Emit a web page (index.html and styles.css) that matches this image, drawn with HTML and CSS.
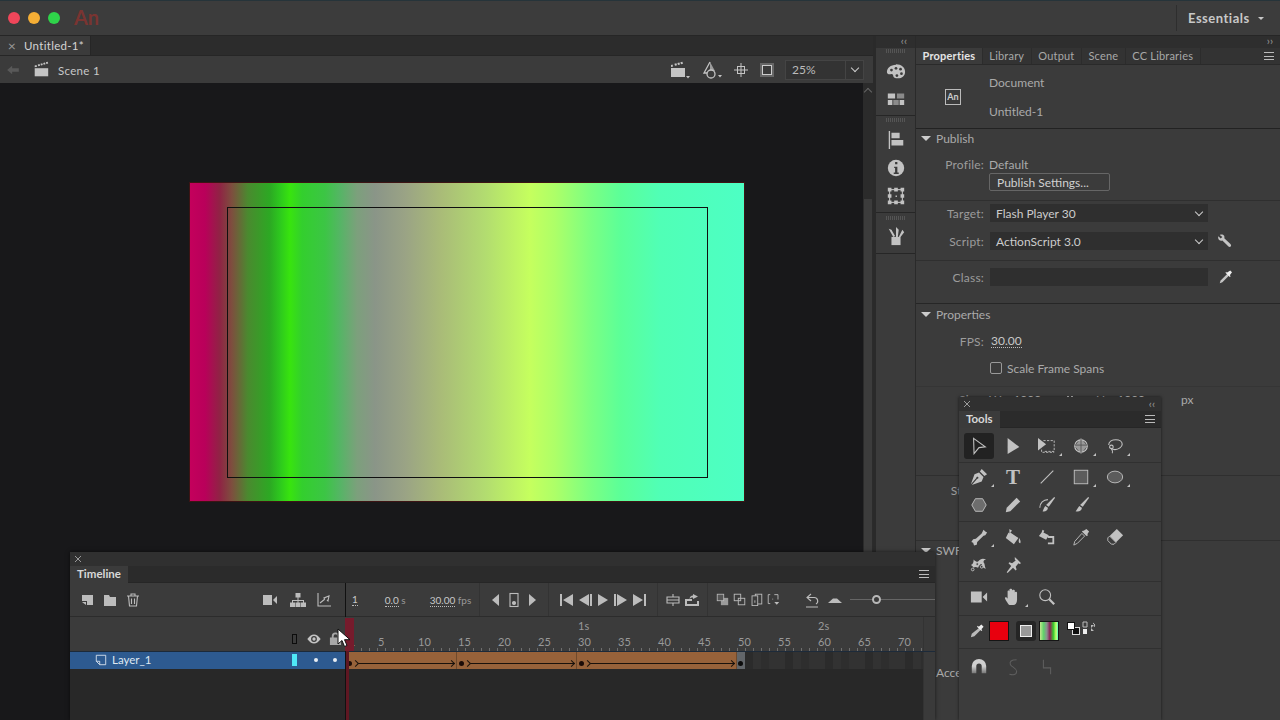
FILE: index.html
```html
<!DOCTYPE html>
<html lang="en">
<head>
    <meta charset="UTF-8">
    <meta name="viewport" content="width=device-width, initial-scale=1.0">
    <title>Adobe Animate</title>
    <link rel="stylesheet" href="styles.css">
</head>
<body>
    <!-- App title bar -->
    <header class="titlebar">
        <span class="light light-red"></span>
        <span class="light light-amber"></span>
        <span class="light light-green"></span>
        <span class="app-logo">An</span>
        <div class="workspace-switch">Essentials <span class="caret"></span></div>
    </header>

    <main class="workspace">
        <!-- Document column -->
        <section class="doc-col">
            <div class="doc-tabs">
                <div class="doc-tab"><span class="doc-close">&times;</span>Untitled-1*</div>
            </div>
            <div class="scene-bar">
                <svg class="back-icon" viewBox="0 0 14 12"><path d="M0 6l6-5v3h8v4H6v3z"/></svg>
                <svg class="icon scene-icon" viewBox="0 0 20 20"><path d="M3 8h15v9H3z"/><path d="M3 7V5l2-.5.6 2zM7 5.800l-.6-2 2-.6.6 2zM10 5l-.6-2 2-.6.6 2zM13 4.200l-.6-2 2-.6.6 2zM16 3.400l-.6-2 2-.5.6 2z"/></svg>
                <span class="scene-name">Scene 1</span>
                <div class="scene-tools">
                    <svg class="icon" viewBox="0 0 20 20"><path d="M1 8h14v9H1z"/><path d="M1 7V5l1.500-.4.6 2zM5 5.800l-.6-2 2-.5.6 2zM8 5l-.6-2 2-.5.6 2zM11 4.200l-.6-2 2-.5.6 2z"/><path d="M16 16h4l-2 2.500z"/></svg>
                    <svg class="icon" viewBox="0 0 20 20"><path d="M8 2L2 13h5" fill="none" stroke="currentColor" stroke-width="1.300"/><path d="M8 2l5 9H8z" opacity=".7"/><circle cx="9" cy="14" r="4" fill="#3b3b3b" stroke="currentColor" stroke-width="1.300"/><path d="M16 15h4l-2 2.500z"/></svg>
                    <svg class="icon" viewBox="0 0 20 20"><path d="M10 3v14M3 10h14" stroke="currentColor" fill="none"/><rect x="6.500" y="6.500" width="7" height="7" fill="none" stroke="currentColor"/></svg>
                    <svg class="icon" viewBox="0 0 20 20"><rect x="3" y="3" width="14" height="14" fill="#666"/><rect x="5.500" y="5.500" width="9" height="9" fill="#3b3b3b" stroke="#ccc"/></svg>
                    <div class="zoom-box"><span class="zoom-value">25%</span><span class="zoom-arrow"><span class="chevron"></span></span></div>
                </div>
            </div>
            <div class="stage-wrap">
                <div class="stage">
                    <div class="artboard">
                        <div class="art-frame"></div>
                    </div>
                </div>
                <div class="stage-scroll">
                    <span class="scroll-up"></span>
                    <span class="scroll-thumb"></span>
                </div>
            </div>
        </section>

        <!-- Collapsed icon dock -->
        <aside class="dock">
            <div class="collapse-bar">&lsaquo;&lsaquo;</div>
            <div class="dock-group">
                <span class="grip"></span>
                <svg class="dock-icon" viewBox="0 0 22 18"><path d="M11 2C5 2 1 6 1 10c0 2 2 3 4 2.500 2-.5 3 .5 3 2 0 2 2 2.500 5 2.500 5 0 8-3 8-7 0-5-4-8.500-10-8.500z"/><g fill="#3b3b3b"><circle cx="6" cy="8" r="1.500"/><circle cx="11" cy="6" r="1.500"/><circle cx="16" cy="7" r="1.500"/><circle cx="17" cy="12" r="1.500"/><circle cx="12" cy="14" r="1.500"/></g></svg>
                <svg class="dock-icon" viewBox="0 0 22 18"><path d="M2 3h8v5.500H2zM2 10h5v5.500H2zM15 10h5v5.500h-5z"/><path d="M12 3h8v5.500h-8zM8 10h6v5.500H8z" fill="#8a8a8a"/></svg>
            </div>
            <div class="dock-group dock-group-tall">
                <span class="grip"></span>
                <svg class="dock-icon" viewBox="0 0 22 22"><path d="M3 1h1.500v20H3zM6 3h9v6H6zM6 11h13v6H6z"/></svg>
                <svg class="dock-icon" viewBox="0 0 22 22"><circle cx="11" cy="11" r="9"/><path d="M9 9.500h3.500V16H14v1.500H8.500V16H10v-5H9zM10 4.500h2.500V7H10z" fill="#3b3b3b"/></svg>
                <svg class="dock-icon" viewBox="0 0 22 22"><rect x="4" y="4" width="14" height="14" fill="none" stroke="currentColor" stroke-width="1.200"/><path d="M2 2h4v4H2zM9 2h4v4H9zM16 2h4v4h-4zM2 9h4v4H2zM16 9h4v4h-4zM2 16h4v4H2zM9 16h4v4H9zM16 16h4v4h-4zM10.500 10.500h1.500v1.500h-1.500z"/></svg>
            </div>
            <div class="dock-group dock-group-last">
                <span class="grip"></span>
                <svg class="dock-icon" viewBox="0 0 22 22"><path d="M6 12h10v9H6z"/><path d="M8 12L3 3l3 1 4 7zM11 12V1l3 3-1 8zM14 12l4-8 2 3-4 5z"/></svg>
            </div>
            <div class="dock-rest"></div>
        </aside>

        <!-- Properties panel -->
        <section class="props">
            <div class="collapse-bar collapse-right">&rsaquo;&rsaquo;</div>
            <div class="props-tabs">
                <span class="props-tab props-tab-active">Properties</span>
                <span class="props-tab">Library</span>
                <span class="props-tab">Output</span>
                <span class="props-tab">Scene</span>
                <span class="props-tab">CC Libraries</span>
                <span class="menu-lines props-menu"></span>
            </div>
            <div class="doc-info">
                <span class="an-badge">An</span>
                <div class="doc-lines">
                    <span>Document</span>
                    <span>Untitled-1</span>
                </div>
            </div>

            <div class="section section-publish">
                <div class="section-head"><span class="tri"></span>Publish</div>
                <div class="row row-profile"><label class="lab">Profile:</label><span>Default</span></div>
                <div class="row"><span class="lab"></span><button class="settings-btn">Publish Settings...</button></div>
            </div>
            <div class="section section-target">
                <div class="row"><label class="lab">Target:</label><div class="select">Flash Player 30<span class="chevron"></span></div></div>
                <div class="row row-script"><label class="lab">Script:</label><div class="select">ActionScript 3.0<span class="chevron"></span></div>
                    <svg class="field-icon" viewBox="0 0 16 16"><path d="M2 1c2-1 4-.5 5 1 .5 1 .5 2 .2 2.800l7 6.700c1 1 1 2 .3 2.800-.8.8-2 .7-2.800-.2L5 7.500C3.500 8 2 7.500 1 6.500 0 5 0 3.500.5 2.500L3 5l2-1.500z"/></svg>
                </div>
            </div>
            <div class="section section-class">
                <div class="row"><label class="lab">Class:</label><div class="select"></div>
                    <svg class="field-icon" viewBox="0 0 16 16"><path d="M11 4l2 2-8 8-3 1 1-3z"/><path d="M10 3l4-2.500 2 2L13.500 6l1 1-1 1-5-5 1-1z" fill="#eee"/></svg>
                </div>
            </div>
            <div class="section section-doc">
                <div class="section-head"><span class="tri"></span>Properties</div>
                <div class="row row-fps"><label class="lab">FPS:</label><span class="hot">30.00</span></div>
                <div class="row row-check"><span class="lab"></span><span class="check"></span>Scale Frame Spans</div>
            </div>
            <div class="section section-size">
                <div class="row">
                    <label class="lab">Size:</label>
                    <span class="size-val">W: <span class="hot">1000</span></span>
                    <svg class="size-link" viewBox="0 0 8 8"><path d="M1 1h2v6H1zM5 1h2v6H5z"/></svg>
                    <span class="size-val size-val-h">H: <span class="hot">1000</span></span>
                    <span>px</span>
                </div>
            </div>
            <div class="section section-stage">
                <div class="row"><label class="lab">Stage:</label></div>
            </div>
            <div class="section section-swf">
                <div class="section-head"><span class="tri"></span>SWF History</div>
            </div>
            <div class="section-head section-acc">Accessibility</div>
        </section>
    </main>

    <!-- Floating timeline panel -->
    <section class="timeline">
        <div class="float-top">
            <svg class="float-close" viewBox="0 0 8 8"><path d="M1 1l6 6M7 1L1 7"/></svg>
        </div>
        <div class="float-tabs">
            <span class="float-tab">Timeline</span>
            <span class="menu-lines"></span>
        </div>
        <div class="tl-toolbar">
            <div class="tl-left">
                <svg class="tl-icon" viewBox="0 0 16 16"><path d="M3 3h11v10H8v-4H3z"/><path d="M3 10h4v3z"/></svg>
                <svg class="tl-icon" viewBox="0 0 16 16"><path d="M2 3h5l1 2h6v9H2z"/></svg>
                <svg class="tl-icon tl-icon-line" viewBox="0 0 16 16"><path d="M2 4h12M6 4V2h4v2M3.500 4l1 10h7l1-10M6.500 6.500v5.500M9.500 6.500v5.500"/></svg>
                <span class="tl-space"></span>
                <svg class="tl-icon" viewBox="0 0 16 16"><path d="M1 3h9v10H1zM11 8l4-4v8z"/></svg>
                <svg class="tl-icon" viewBox="0 0 16 16"><path d="M5.500 1h5v4.500h-5zM7.500 5.500h1V8H14v2.500h-1V9H8.500v1.500h-1V9H3v1.500H2V8h5.500zM0 10.500h5V15H0zM5.500 10.500h5V15h-5zM11 10.500h5V15h-5z"/></svg>
                <svg class="tl-icon tl-icon-line" viewBox="0 0 16 16"><path d="M2 1v13h13M4 11l5-4M9 7l-1-1 5-2-1 5-1-1"/></svg>
            </div>
            <div class="tl-controls">
                <div class="tl-group tl-readouts">
                    <span class="hot">1</span>
                    <span class="readout-time"><span class="hot">0.0</span> s</span>
                    <span class="readout-fps"><span class="hot">30.00</span> fps</span>
                </div>
                <div class="tl-group tl-frames">
                    <svg class="tl-icon" viewBox="0 0 16 16"><path d="M12 2v12L5 8z"/></svg>
                    <svg class="tl-icon tl-icon-line" viewBox="0 0 16 16"><rect x="4" y="1.500" width="8" height="13"/><circle cx="8" cy="11" r="1.500" fill="currentColor"/></svg>
                    <svg class="tl-icon" viewBox="0 0 16 16"><path d="M4 2v12l7-6z"/></svg>
                </div>
                <div class="tl-group tl-transport">
                    <svg class="tl-icon" viewBox="0 0 16 16"><path d="M1 2h2v12H1zM14 2v12L4 8z"/></svg>
                    <svg class="tl-icon" viewBox="0 0 16 16"><path d="M12 2v12L2 8zM13 2h2v12h-2z"/></svg>
                    <svg class="tl-icon" viewBox="0 0 16 16"><path d="M3 2v12l10-6z"/></svg>
                    <svg class="tl-icon" viewBox="0 0 16 16"><path d="M1 2h2v12H1zM4 2v12l10-6z"/></svg>
                    <svg class="tl-icon" viewBox="0 0 16 16"><path d="M2 2v12l10-6zM13 2h2v12h-2z"/></svg>
                </div>
                <div class="tl-group tl-loop">
                    <svg class="tl-icon tl-icon-line" viewBox="0 0 16 16"><path d="M8 2v3M8 11v3M2 5h12v6H2z M2 8h12"/></svg>
                    <svg class="tl-icon" viewBox="0 0 16 16"><path d="M1 7h7v2H3v3h10V9h2v5H1zM9 2l5 2.500L9 7V5.500c-2 0-3 .5-3.500 2C5.500 5 7 3.500 9 3.500z"/></svg>
                </div>
                <div class="tl-group tl-onion">
                    <svg class="tl-icon" viewBox="0 0 16 16"><path d="M6 6h9v9H6z" opacity=".75"/><rect x="1.500" y="1.500" width="8" height="8" fill="#555" stroke="currentColor"/></svg>
                    <svg class="tl-icon tl-icon-line" viewBox="0 0 16 16"><rect x="1.500" y="1.500" width="8" height="8"/><rect x="6.500" y="6.500" width="8" height="8"/></svg>
                    <svg class="tl-icon tl-icon-line" viewBox="0 0 16 16"><rect x="6.500" y="1.500" width="8" height="12"/><rect x="2.500" y="3.500" width="7" height="12" fill="#3b3b3b"/><path d="M6 9v3"/></svg>
                    <svg class="tl-icon tl-icon-line" viewBox="0 0 16 16"><path d="M4 2H1.500v11H4M9 2h4.500v6M7 7v1"/><path d="M9 11h6l-3 3.500z" fill="currentColor" stroke="none"/></svg>
                </div>
                <div class="tl-group tl-zoom">
                    <svg class="tl-icon tl-icon-line" viewBox="0 0 16 16"><path d="M7 2L3 5.500 7 9M3 5.500h7a3.500 3.500 0 0 1 2 6.500M2 15h12"/></svg>
                    <svg class="tl-icon" viewBox="0 0 16 16"><path d="M1 11l5-4.500h4l5 4.500z"/></svg>
                    <div class="tl-slider"><span class="tl-knob"></span></div>
                </div>
            </div>
        </div>
        <div class="tl-head">
            <div class="tl-left tl-left-head">
                <span class="mark-outline"></span>
                <svg class="tl-eye" viewBox="0 0 16 12"><path d="M0 6c3-4 5-5.500 8-5.500S13 2 16 6c-3 4-5 5.500-8 5.500S3 10 0 6z"/><circle cx="8" cy="6" r="3.500" fill="#3b3b3b"/><circle cx="8" cy="6" r="2"/></svg>
                <svg class="tl-lock" viewBox="0 0 14 14"><path d="M3 6V4.500a4 4 0 0 1 8 0V6h2v8H1V6zM5 6h4V4.500a2 2 0 0 0-4 0z"/></svg>
            </div>
            <div class="ruler">
                <div class="seconds">
                    <span class="sec">1s</span>
                    <span class="sec">2s</span>
                </div>
                <div class="frame-nums">
                    <span class="num num-first">1</span>
                    <span class="num">5</span>
                    <span class="num">10</span>
                    <span class="num">15</span>
                    <span class="num">20</span>
                    <span class="num">25</span>
                    <span class="num">30</span>
                    <span class="num">35</span>
                    <span class="num">40</span>
                    <span class="num">45</span>
                    <span class="num">50</span>
                    <span class="num">55</span>
                    <span class="num">60</span>
                    <span class="num">65</span>
                    <span class="num">70</span>
                </div>
            </div>
            <div class="tl-scroll"></div>
        </div>
        <div class="tl-layer">
            <div class="layer-name">
                <svg class="layer-icon" viewBox="0 0 14 14"><path d="M1.500 1.500h11v11h-7l-4-4zM1.500 8.500h4v4" fill="none" stroke="currentColor"/></svg>
                <span class="layer-label">Layer_1</span>
                <span class="layer-color"></span>
                <span class="layer-dot layer-dot-eye"></span>
                <span class="layer-dot"></span>
            </div>
            <div class="frames">
                <div class="tween tween-a"><span class="tween-line"></span></div>
                <div class="tween tween-b"><span class="tween-line"></span></div>
                <div class="tween tween-c"><span class="tween-line"></span></div>
                <div class="end-key"></div>
                <div class="empty-frames"></div>
            </div>
            <div class="tl-scroll"></div>
        </div>
        <div class="tl-rest">
            <div class="tl-rest-fill"></div>
            <div class="tl-scroll"></div>
        </div>
        <span class="playhead-top"></span>
        <span class="playhead-head"></span>
        <span class="playhead-line"></span>
        <svg class="cursor" viewBox="0 0 14 20"><path d="M1 1v15l4-3.500 2.500 6 2.500-1-2.500-5.800H13z" fill="#fff" stroke="#111"/></svg>
    </section>

    <!-- Floating tools panel -->
    <section class="tools">
        <div class="float-top">
            <svg class="float-close" viewBox="0 0 8 8"><path d="M1 1l6 6M7 1L1 7"/></svg>
            <span class="float-collapse">&lsaquo;&lsaquo;</span>
        </div>
        <div class="float-tabs">
            <span class="float-tab">Tools</span>
            <span class="menu-lines"></span>
        </div>

        <div class="tool-group tool-group-select">
            <div class="tool-row tool-row-short">
                <span class="tool tool-on"><svg class="tool-line" viewBox="0 0 20 20"><path d="M4 1.500l13 9.500-7 .8L4.500 18.500z"/></svg></span>
                <span class="tool"><svg viewBox="0 0 20 20"><path d="M4 1l13 10-13 8z"/></svg></span>
                <span class="tool more"><svg viewBox="0 0 20 20"><path d="M0 1l9 7-9 7z"/><path d="M6 4h12v12H6" fill="none" stroke="currentColor" stroke-dasharray="2.500 1.500"/><path d="M4 14v3h14" fill="none" stroke="currentColor" stroke-dasharray="2.500 1.500"/></svg></span>
                <span class="tool more"><svg viewBox="0 0 20 20"><path d="M10 1l7 9-7 9-7-9z" fill="#999"/><circle cx="10" cy="10" r="7" fill="none" stroke="#ccc" stroke-width="1.200"/><path d="M3 9h14M10 2v16" stroke="#555"/></svg></span>
                <span class="tool more"><svg class="tool-line" viewBox="0 0 20 20"><path d="M3 9c0-4 4-6 8-6s7 2 7 5-4 6-8 6c-2 0-4-.5-5-2"/><circle cx="6" cy="11" r="2"/><path d="M6 13c1 2 2 3 1 5"/></svg></span>
            </div>
        </div>
        <div class="tool-group tool-group-draw">
            <div class="tool-row">
                <span class="tool more"><svg viewBox="0 0 20 20"><path d="M13 1l6 6-3 2-5-5zM10 5l5 5-2 5-11 4 6-7c1 0 2-1 1-2-1-.5-2 0-2 1L1 18l4-11z"/></svg></span>
                <span class="tool tool-type">T</span>
                <span class="tool"><svg class="tool-line" viewBox="0 0 20 20"><path d="M3 17L17 3"/></svg></span>
                <span class="tool more"><svg viewBox="0 0 20 20"><rect x="2.500" y="2.500" width="15" height="15" fill="#5c5c5c" stroke="currentColor"/></svg></span>
                <span class="tool more"><svg viewBox="0 0 20 20"><ellipse cx="10" cy="10" rx="8.500" ry="6.500" fill="#5c5c5c" stroke="currentColor"/></svg></span>
            </div>
            <div class="tool-row">
                <span class="tool"><svg viewBox="0 0 20 20"><path d="M6 3h8l4 7-4 7H6l-4-7z" fill="#6d6d6d" stroke="currentColor"/></svg></span>
                <span class="tool"><svg viewBox="0 0 20 20"><path d="M14 2l4 4-11 11-5 1 1-5z"/></svg></span>
                <span class="tool"><svg viewBox="0 0 20 20"><path d="M18 1l1 1-7 10-3-2z"/><path d="M8 11l3 2c0 3-3 5-6 4 1-1 1-3 3-6z"/><path d="M11 4C6 4 2 8 2 13" fill="none" stroke="currentColor" stroke-width="1.200"/></svg></span>
                <span class="tool"><svg viewBox="0 0 20 20"><path d="M18 1l1 1-7 10-3-2z"/><path d="M8 11l3 2c0 3-3 5-7 4 1-1 2-3 4-6z"/></svg></span>
            </div>
        </div>
        <div class="tool-group tool-group-edit">
            <div class="tool-row">
                <span class="tool more"><svg viewBox="0 0 20 20"><path d="M13 6l2-4 2 2 2 1-2 3-2 .5-7 7-.5 3-3 1-1-3-2-1 2-3 3-.5z"/></svg></span>
                <span class="tool"><svg viewBox="0 0 20 20"><path d="M6 1l3 2-2 2 9 6-5 7-9-7 3-6 1 1zM17 11c1 2 2 4 1 6-2 0-2-3-1-6z"/></svg></span>
                <span class="tool"><svg viewBox="0 0 20 20"><path d="M5 2l2 1-1 2 6 3-3 5-8-4 3-4zM11 9h7v9h-7v-2h5v-5h-5z"/></svg></span>
                <span class="tool"><svg viewBox="0 0 20 20"><path d="M13 3l3-2 3 3-2 3 1 1-2 1-5-5 1-1z"/><path d="M11 6l3 3-8 8-4 2 1-4z" fill="#3c3c3c" stroke="currentColor"/></svg></span>
                <span class="tool"><svg viewBox="0 0 20 20"><path d="M12 1l7 7-8 8-7-7z"/><path d="M4 9l7 7-2 2H6l-4-4v-3z" fill="#3c3c3c" stroke="currentColor"/></svg></span>
            </div>
            <div class="tool-row">
                <span class="tool"><svg viewBox="0 0 20 20"><path d="M1 10c3-1 3-4 3-6 2 2 3 3 5 2 3-3 5-4 9-2-2 0-3 1-3 3 2 2 1 6 3 7-3 0-5-2-5-5-2 0-3 2-4 4-2-1-4-1-5 0-1-1-1-2-3-3z"/><g fill="#3c3c3c" stroke="currentColor"><circle cx="3" cy="15" r="1.500"/><circle cx="8" cy="9" r="1.500"/><circle cx="13" cy="12" r="1.500"/></g></svg></span>
                <span class="tool"><svg viewBox="0 0 20 20"><path d="M12 1l7 7-2 1-1-1-3 4 1 3-1 1-3-3-6 6-1-1 5-7-3-3 1-1 3 1 4-3-1-1z"/></svg></span>
            </div>
        </div>
        <div class="tool-group tool-group-view">
            <div class="tool-row">
                <span class="tool"><svg viewBox="0 0 20 20"><path d="M1 4h12v12H1zM14 10l5-5v10z"/></svg></span>
                <span class="tool more"><svg viewBox="0 0 20 20"><path d="M6 19c-2-2-5-7-5-8s2-1 3 1V4c0-1.500 2-1.500 2 0V2c0-1.500 3-1.500 3 0v1c0-1.500 3-1.500 3 0v2c0-1 2.500-1 2.500.5V13c0 4-2 6-4 6z"/></svg></span>
                <span class="tool"><svg class="tool-line" viewBox="0 0 20 20"><circle cx="8" cy="8" r="6"/><path d="M12.500 12.500L18 18" stroke-width="2.500"/></svg></span>
            </div>
        </div>
        <div class="tool-group tool-group-colour">
            <div class="colour-row">
                <svg class="colour-pencil" viewBox="0 0 16 16"><path d="M11 4l2 2-8 8-4 1 1-4z"/><path d="M10 3l3-2.500 2.500 2.500L13 6l1 1-1 1-5-5 1-1z" fill="#eee"/></svg>
                <span class="swatch swatch-red"></span>
                <span class="obj-toggle"><span class="obj-inner"></span></span>
                <span class="swatch swatch-grad"></span>
                <span class="bw-swap"><span class="bw-back"></span><span class="bw-front"></span></span>
                <svg class="swap-icon" viewBox="0 0 14 14"><path d="M1 1h4v5H1z" fill="none" stroke="#bbb"/><path d="M1 8h4v5H1z" fill="#eee"/><path d="M9 1v3h3L9 7zM9 13v-3H12L9 7z"/><path d="M11 2c2 1 2 3 1 4" fill="none" stroke="currentColor"/></svg>
            </div>
        </div>
        <div class="tool-row tool-row-last">
            <span class="tool"><svg viewBox="0 0 20 20"><defs><linearGradient id="magnetFade" x1="0" y1="0" x2="0" y2="1"><stop offset="0.500" stop-color="#cfcfcf"/><stop offset="1" stop-color="#777"/></linearGradient></defs><path fill="url(#magnetFade)" d="M2 17V9a8 8 0 0 1 16 0v8h-5V9a3 3 0 0 0-6 0v8z"/></svg></span>
            <span class="tool tool-dim"><svg class="tool-line" viewBox="0 0 20 20"><path d="M14 2C8 2 6 4 7 7c1 3 7 4 7 8s-4 4-8 3"/></svg></span>
            <span class="tool tool-dim"><svg class="tool-line" viewBox="0 0 20 20"><path d="M6 2v9h8v7"/></svg></span>
        </div>
    </section>
</body>
</html>
```

FILE: styles.css
```css
* {
    box-sizing: border-box;
}

body {
    font-family: "Lato", "Noto Sans", sans-serif;
    font-size: 12px;
    background-color: #3b3b3b;
    color: #b4b4b4;
    margin: 0;
    width: 1280px;
    height: 720px;
    overflow: hidden;
    position: relative;
}

svg {
    fill: currentColor;
    display: block;
    flex: none;
}

/* Title bar */
.titlebar {
    height: 36px;
    background-color: #3c3c3c;
    border-top: 1px solid #26343a;
    border-bottom: 1px solid #262626;
    display: flex;
    align-items: center;
    padding-left: 8px;
    gap: 8px;
}

.light {
    width: 12px;
    height: 12px;
    border-radius: 50%;
}

.light-red {
    background-color: #f0465a;
}

.light-amber {
    background-color: #f5ae35;
}

.light-green {
    background-color: #2fd34a;
}

.app-logo {
    color: #7a3431;
    font-size: 20px;
    font-weight: 700;
    margin-left: 6px;
    margin-top: -3px;
}

.workspace-switch {
    margin-left: auto;
    width: 104px;
    height: 26px;
    border-left: 1px solid #2e2e2e;
    padding-left: 11px;
    display: flex;
    align-items: center;
    gap: 8px;
    color: #c8c8c8;
    font-size: 13px;
    font-weight: 700;
    letter-spacing: 0.5px;
}

.caret {
    width: 0;
    height: 0;
    border-left: 3px solid transparent;
    border-right: 3px solid transparent;
    border-top: 3px solid #c8c8c8;
}

/* Main layout */
.workspace {
    display: flex;
    height: 684px;
}

.doc-col {
    width: 873px;
    display: flex;
    flex-direction: column;
}

.doc-tabs {
    height: 20px;
    background-color: #2c2c2c;
    border-bottom: 1px solid #262626;
    display: flex;
}

.doc-tab {
    width: 91px;
    background-color: #3b3b3b;
    border-right: 1px solid #262626;
    display: flex;
    align-items: center;
    color: #d4d4d4;
    font-size: 11.500px;
    letter-spacing: 0.3px;
}

.doc-close {
    width: 24px;
    text-align: center;
    font-size: 14px;
    color: #999;
}

.scene-bar {
    height: 27px;
    display: flex;
    align-items: center;
    padding-left: 7px;
    padding-right: 9px;
    background-color: #3b3b3b;
}

.back-icon {
    width: 12px;
    height: 10px;
    color: #595959;
}

.icon {
    width: 20px;
    height: 20px;
    color: #c4c4c4;
}

.scene-icon {
    margin-left: 13px;
    width: 18px;
    height: 18px;
}

.scene-name {
    margin-left: 8px;
    margin-top: 1px;
    color: #c8c8c8;
    font-size: 11.500px;
    letter-spacing: 0.3px;
}

.scene-tools {
    margin-left: auto;
    display: flex;
    align-items: center;
    gap: 8px;
}

.scene-tools .icon:nth-child(1) {
    margin-right: 4px;
}

.scene-tools .icon:nth-child(2) {
    margin-right: 1px;
}

.scene-tools .icon:nth-child(3) {
    margin-right: -2px;
}

.zoom-box {
    width: 79px;
    height: 20px;
    background-color: #333;
    border: 1px solid #444;
    display: flex;
    align-items: center;
    justify-content: space-between;
    color: #bbb;
}

.zoom-value {
    padding-left: 6px;
}

.zoom-arrow {
    width: 18px;
    height: 18px;
    border-left: 1px solid #444;
    display: flex;
    align-items: center;
    justify-content: center;
}

.chevron {
    width: 6px;
    height: 6px;
    border-right: 1px solid #ccc;
    border-bottom: 1px solid #ccc;
    transform: rotate(45deg);
    margin-top: -3px;
}

.stage-wrap {
    flex: 1;
    display: flex;
}

.stage {
    width: 863px;
    background-color: #18181a;
    padding: 100px 0 0 190px;
}

.artboard {
    width: 554px;
    height: 318px;
    display: flex;
    align-items: center;
    justify-content: center;
    background: linear-gradient(90deg,
        #c4005c 0, #b9005a 15px, #8f2444 30px, #7d4f3e 42px, #4a8a2f 58px,
        #2ca923 80px, #2dc81e 90px, #38e40e 100px, #33cf2d 112px, #3cc545 135px,
        #55b565 150px, #7ca07c 167px, #8a9588 185px, #9aa385 215px, #a9bb78 250px,
        #b2dc70 295px, #c5ff5e 340px, #adff68 365px, #7cff82 400px,
        #5cff98 430px, #50ffb6 470px, #4dffc4 554px);
    box-shadow: 0 0 0 1px #3d1414;
}

.art-frame {
    width: 481px;
    height: 271px;
    border: 1px solid #101010;
}

.stage-scroll {
    width: 10px;
    background-color: #2b2b2b;
    display: flex;
    flex-direction: column;
    align-items: center;
}

.scroll-up {
    width: 6px;
    height: 6px;
    border-left: 1px solid #666;
    border-top: 1px solid #666;
    transform: rotate(45deg);
    margin-top: 6px;
}

.scroll-thumb {
    width: 8px;
    height: 354px;
    margin-top: 104px;
    background-color: #3c3c3c;
}

/* Icon dock */
.dock {
    width: 43px;
    display: flex;
    flex-direction: column;
    background-color: #3b3b3b;
    border-left: 3px solid #2a2a2a;
    border-right: 1px solid #2a2a2a;
}

.collapse-bar {
    height: 12px;
    background-color: #2e2e2e;
    color: #999;
    font-size: 11px;
    line-height: 10px;
    text-align: right;
    padding-right: 8px;
}

.dock-group {
    height: 68px;
    display: flex;
    flex-direction: column;
    align-items: center;
    gap: 8px;
    padding-top: 1px;
    border-bottom: 1px solid #262626;
}

.dock-group-tall {
    height: 97px;
    padding-top: 2px;
}

.dock-group-last {
    height: 41px;
    padding-top: 3px;
    gap: 6px;
}

.dock-rest {
    flex: 1;
}

.grip {
    width: 20px;
    height: 4px;
    background: repeating-linear-gradient(90deg, #555 0, #555 1px, transparent 1px, transparent 2px);
}

.dock-icon {
    width: 20px;
    height: 20px;
    color: #c2c2c2;
}

/* Properties panel */
.props {
    flex: 1;
    display: flex;
    flex-direction: column;
    min-width: 0;
}

.collapse-right {
    padding-right: 7px;
}

.props-tabs {
    height: 17px;
    background-color: #333;
    display: flex;
    align-items: center;
    border-bottom: 1px solid #2a2a2a;
    font-size: 11px;
    letter-spacing: 0.2px;
}

.props-tab {
    height: 100%;
    padding: 0 6.500px;
    line-height: 16px;
    color: #a8a8a8;
    border-right: 1px solid #2c2c2c;
}

.props-tab-active {
    background-color: #3b3b3b;
    color: #e4e4e4;
    font-weight: 700;
}

.menu-lines {
    width: 10px;
    height: 8px;
    border-top: 1px solid #bbb;
    border-bottom: 1px solid #bbb;
    background: linear-gradient(#bbb, #bbb) center / 100% 1px no-repeat;
    margin-left: auto;
}

.props-menu {
    margin-right: 6px;
}

.doc-info {
    height: 64px;
    border-bottom: 1px solid #222;
    display: flex;
    align-items: center;
    padding-left: 29px;
    gap: 28px;
}

.an-badge {
    width: 16px;
    height: 16px;
    border: 1px solid #bbb;
    font-size: 9px;
    font-weight: 700;
    line-height: 14px;
    text-align: center;
    color: #ccc;
}

.doc-lines {
    display: flex;
    flex-direction: column;
    gap: 14px;
    color: #aaa;
}

.section {
    border-bottom: 1px solid #2f2f2f;
}

.section-head {
    height: 18px;
    display: flex;
    align-items: center;
    padding-left: 5px;
    color: #aaa;
}

.tri {
    width: 0;
    height: 0;
    margin-right: 5px;
    border-left: 5px solid transparent;
    border-right: 5px solid transparent;
    border-top: 5px solid #ccc;
}

.row {
    height: 18px;
    display: flex;
    align-items: center;
    color: #aaa;
}

.lab {
    width: 68px;
    margin-right: 5px;
    text-align: right;
    color: #9c9c9c;
    letter-spacing: 0.2px;
}

.section-publish {
    height: 72px;
}

.row-profile {
    margin-top: 8px;
}

.settings-btn {
    width: 121px;
    height: 18px;
    padding: 1px 0 0 7px;
    text-align: left;
    background-color: #3b3b3b;
    border: 1px solid #666;
    border-radius: 2px;
    color: #d0d0d0;
    font: inherit;
}

.section-target {
    height: 60px;
    padding-top: 3px;
}

.select {
    width: 218px;
    height: 18px;
    margin-left: 1px;
    padding: 0 6px;
    background-color: #2f2f2f;
    display: flex;
    align-items: center;
    justify-content: space-between;
    color: #ccc;
}

.row-script {
    margin-top: 10px;
}

.field-icon {
    width: 14px;
    height: 14px;
    margin-left: 10px;
    color: #c4c4c4;
}

.section-class {
    height: 43px;
    padding-top: 7px;
    border-bottom-color: #262626;
}

.section-doc {
    height: 83px;
    padding-top: 1px;
    border-bottom-color: #353535;
}

.row-fps {
    margin-top: 9px;
}

.hot {
    border-bottom: 1px dotted #bbb;
    color: #c8c8c8;
    line-height: 12px;
}

.row-fps .hot {
    margin-left: 2px;
}

.row-check {
    margin-top: 9px;
}

.check {
    width: 12px;
    height: 12px;
    margin: 0 5px 0 1px;
    border: 1px solid #999;
    border-radius: 2px;
}

.section-size {
    height: 89px;
    padding-top: 3px;
}

.size-val {
    width: 77px;
}

.size-val .hot {
    margin-left: 6px;
}

.size-val-h {
    width: 85px;
    margin-left: 22px;
}

.size-link {
    width: 8px;
    height: 8px;
    color: #bbb;
}

.section-stage {
    height: 65px;
    padding-top: 5px;
}

.section-swf {
    height: 122px;
    border-bottom: 0;
}

.section-acc {
    padding-left: 20px;
}

/* Floating panels */
.timeline {
    position: absolute;
    left: 70px;
    top: 552px;
    width: 865px;
    height: 168px;
    display: flex;
    flex-direction: column;
    background-color: #3b3b3b;
    box-shadow: 0 0 4px rgba(0, 0, 0, 0.6);
}

.tools {
    position: absolute;
    left: 959px;
    top: 397px;
    width: 202px;
    height: 323px;
    background-color: #3c3c3c;
    box-shadow: 0 0 3px rgba(0, 0, 0, 0.6);
}

.float-top {
    height: 14px;
    background-color: #303030;
    display: flex;
    align-items: center;
    justify-content: space-between;
    padding: 0 6px 0 4px;
    color: #9a9a9a;
}

.float-close {
    width: 8px;
    height: 8px;
    fill: none;
    stroke: currentColor;
}

.float-collapse {
    font-size: 11px;
    line-height: 10px;
}

.float-tabs {
    height: 17px;
    background-color: #2b2b2b;
    border-bottom: 1px solid #262626;
    display: flex;
    align-items: center;
    padding-right: 6px;
}

.float-tab {
    height: 17px;
    padding: 0 7px;
    line-height: 16px;
    background-color: #3b3b3b;
    color: #d8d8d8;
    font-weight: 700;
    font-size: 11.500px;
}

/* Timeline */
.tl-toolbar {
    height: 34px;
    display: flex;
    border-bottom: 1px solid #2c2c2c;
}

.tl-left {
    width: 275px;
    flex: none;
    display: flex;
    align-items: center;
    padding-left: 9px;
    gap: 7px;
}

.tl-space {
    flex: 1;
}

.tl-icon {
    width: 16px;
    height: 16px;
    color: #bcbcbc;
}

.tl-icon-line {
    fill: none;
    stroke: currentColor;
    stroke-width: 1.100;
}

.tl-left .tl-icon:nth-child(6) {
    margin-left: 5px;
}

.tl-left .tl-icon:nth-child(7) {
    margin-left: 3px;
    margin-right: 13px;
}

.tl-controls {
    flex: 1;
    display: flex;
    min-width: 0;
    color: #999;
    white-space: nowrap;
}

.tl-group {
    height: 100%;
    display: flex;
    align-items: center;
    justify-content: center;
    border-right: 1px solid #333;
}

.tl-readouts {
    width: 135px;
    justify-content: flex-start;
    padding-left: 7px;
    font-size: 10px;
}

.readout-time {
    margin-left: 27px;
}

.readout-fps {
    margin-left: 24px;
}

.tl-frames {
    width: 69px;
    gap: 3px;
}

.tl-transport {
    width: 109px;
    gap: 2px;
}

.tl-loop {
    width: 50px;
    gap: 3px;
}

.tl-onion {
    width: 80px;
    gap: 4px;
    border-right: 0;
}

.tl-onion .tl-icon {
    width: 13px;
    height: 13px;
}

.tl-zoom {
    flex: 1;
    border-right: 0;
    justify-content: flex-start;
    padding-left: 16px;
    gap: 7px;
}

.tl-slider {
    flex: 1;
    height: 1px;
    background-color: #666;
    display: flex;
    align-items: center;
    padding-left: 22px;
}

.tl-knob {
    width: 9px;
    height: 9px;
    flex: none;
    border: 2px solid #b8b8b8;
    border-radius: 50%;
    background-color: #3b3b3b;
}

.tl-head {
    height: 34px;
    display: flex;
}

.tl-left-head {
    justify-content: flex-end;
    padding-left: 0;
    gap: 10px;
    padding-right: 3px;
    padding-top: 9px;
}

.mark-outline {
    width: 5px;
    height: 10px;
    border: 1px solid #0c0c0c;
}

.tl-eye {
    width: 14px;
    height: 10px;
    color: #c4c4c4;
}

.tl-lock {
    width: 13px;
    height: 13px;
    margin-left: -2px;
    color: #a8a8a8;
}

.ruler {
    flex: 1;
    min-width: 0;
    overflow: hidden;
    display: flex;
    flex-direction: column;
    background:
        repeating-linear-gradient(90deg, #6e6e6e 0, #6e6e6e 1px, transparent 1px, transparent 8px) 0 100% / 100% 3px no-repeat,
        #3b3b3b;
}

.seconds {
    height: 17px;
    flex: none;
    display: flex;
    align-items: center;
    padding-left: 233px;
    color: #999;
    font-size: 11px;
}

.sec {
    width: 240px;
    flex: none;
}

.frame-nums {
    display: flex;
    margin-top: 1px;
    color: #999;
    font-size: 11px;
    line-height: 14px;
}

.num {
    width: 40px;
    flex: none;
    padding-left: 1px;
}

.num-first {
    width: 32px;
    padding-left: 4px;
}

.tl-scroll {
    width: 12px;
    flex: none;
    background-color: #3a3a3a;
    border-left: 1px solid #333;
}

.tl-layer {
    height: 18px;
    display: flex;
    border-top: 1px solid #1c2a3a;
}

.layer-name {
    width: 275px;
    flex: none;
    display: flex;
    align-items: center;
    padding-left: 25px;
    padding-bottom: 2px;
    background-color: #2d5a90;
    color: #dfe8f2;
    font-size: 11.500px;
}

.layer-icon {
    width: 12px;
    height: 12px;
}

.layer-label {
    margin-left: 5px;
    width: 180px;
}

.layer-color {
    width: 5px;
    height: 12px;
    background-color: #4fe8f8;
}

.layer-dot {
    width: 4px;
    height: 4px;
    border-radius: 50%;
    background-color: #e8eef4;
    margin-left: 15px;
}

.layer-dot-eye {
    margin-left: 17px;
}

.frames {
    flex: 1;
    min-width: 0;
    display: flex;
    background-color: #2b2b2b;
}

/* Tween spans, dot and arrow drawn on top */
.tween {
    position: relative;
    flex: none;
    background-color: #97623a;
    border-right: 1px solid #6f4a2c;
}

.tween::before {
    content: "";
    position: absolute;
    left: 2px;
    top: 9px;
    width: 5px;
    height: 5px;
    border-radius: 50%;
    background-color: #1c0c08;
}

.tween-line {
    position: absolute;
    left: 14px;
    right: 2px;
    top: 11px;
    height: 1px;
    background-color: #1a120c;
}

.tween-line::before,
.tween-line::after {
    content: "";
    position: absolute;
    top: -2px;
    width: 4px;
    height: 4px;
    border-top: 1px solid #1a120c;
    border-right: 1px solid #1a120c;
    transform: rotate(45deg);
}

.tween-line::before {
    left: -6px;
}

.tween-line::after {
    right: 0;
}

.tween-a {
    width: 112px;
}

.tween-b {
    width: 120px;
}

.tween-c {
    width: 160px;
}

.end-key {
    position: relative;
    width: 8px;
    flex: none;
    background-color: #62666a;
}

.end-key::before {
    content: "";
    position: absolute;
    left: 1px;
    top: 9px;
    width: 5px;
    height: 5px;
    border-radius: 50%;
    background-color: #0c0c0c;
}

.empty-frames {
    flex: 1;
    background:
        repeating-linear-gradient(90deg, #2b2b2b 0, #2b2b2b 8px, #323232 8px, #323232 16px, #2e2e2e 16px, #2e2e2e 24px, #323232 24px, #323232 40px);
}

.tl-rest {
    flex: 1;
    display: flex;
}

.tl-rest-fill {
    flex: 1;
    background-color: #282828;
}

.playhead-top {
    position: absolute;
    left: 275px;
    top: 31px;
    width: 1px;
    height: 34px;
    background-color: #111;
}

.playhead-head {
    position: absolute;
    left: 275px;
    top: 66px;
    width: 9px;
    height: 33px;
    background-color: #761b2c;
}

.playhead-line {
    position: absolute;
    left: 275px;
    top: 99px;
    width: 4px;
    height: 69px;
    border-left: 1px solid #111;
    background-color: #5f1722;
}

.cursor {
    position: absolute;
    left: 267px;
    top: 76px;
    width: 14px;
    height: 20px;
}

/* Tools */
.tool-group {
    border-bottom: 1px solid #303030;
}

.tool-group-select {
    height: 35px;
    padding-top: 5px;
}

.tool-group-draw {
    height: 59px;
}

.tool-group-edit {
    height: 60px;
    padding-top: 1px;
}

.tool-group-view {
    height: 34px;
    padding-top: 1px;
}

.tool-group-colour {
    height: 33px;
    padding-top: 3px;
}

.tool-row {
    display: flex;
    align-items: center;
    height: 28px;
    padding-left: 3px;
}

.tool-row-short {
    height: 26px;
}

.tool {
    position: relative;
    width: 34px;
    height: 26px;
    display: flex;
    align-items: center;
    justify-content: center;
    color: #c2c2c2;
}

.tool svg {
    width: 18px;
    height: 18px;
}

.tool .tool-line {
    fill: none;
    stroke: currentColor;
    stroke-width: 1.200;
}

.tool-on {
    background-color: #222;
    border-radius: 3px;
    width: 30px;
    margin: 0 2px;
}

.tool.more::after {
    content: "";
    position: absolute;
    right: 2px;
    bottom: 3px;
    border-left: 3px solid transparent;
    border-bottom: 3px solid #c2c2c2;
}

.tool-type {
    font-family: "Liberation Serif", serif;
    font-size: 21px;
    font-weight: 700;
}

.colour-row {
    height: 24px;
    display: flex;
    align-items: center;
    padding-left: 11px;
}

.colour-pencil {
    width: 14px;
    height: 14px;
    color: #bbb;
}

.swatch {
    width: 20px;
    height: 20px;
    border: 1px solid #151515;
}

.swatch-red {
    margin-left: 5px;
    background-color: #e8000e;
}

.obj-toggle {
    width: 20px;
    height: 20px;
    margin-left: 7px;
    background-color: #252525;
    border-radius: 3px;
    display: flex;
    align-items: center;
    justify-content: center;
}

.obj-inner {
    width: 12px;
    height: 12px;
    background-color: #999;
    border: 1px solid #eee;
    box-shadow: 0 0 0 1px #252525;
}

.swatch-grad {
    margin-left: 3px;
    background: linear-gradient(90deg, #c2e88e, #5fd06a 20%, #8d9090 38%, #8d1f55 55%, #3ccf30 75%, #c8ff70 90%, #50ffc0);
}

.bw-swap {
    position: relative;
    width: 13px;
    height: 13px;
    margin-left: 8px;
    margin-top: -6px;
}

.bw-back {
    position: absolute;
    right: 0;
    bottom: 0;
    width: 8px;
    height: 8px;
    background-color: #111;
    border: 1px solid #ddd;
}

.bw-front {
    position: absolute;
    left: 0;
    top: 0;
    width: 8px;
    height: 8px;
    background-color: #fff;
    border: 1px solid #111;
}

.swap-icon {
    width: 14px;
    height: 14px;
    margin-left: 2px;
    margin-top: -6px;
    color: #bbb;
}

.tool-row-last {
    margin-top: 4px;
}

.tool-dim {
    color: #5e5e5e;
}
```
